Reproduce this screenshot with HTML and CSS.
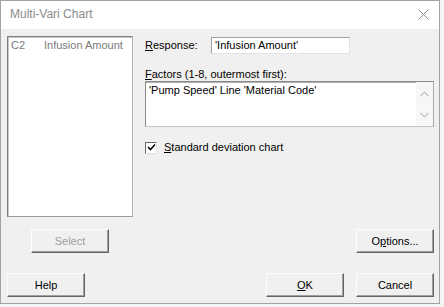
FILE: index.html
```html
<!DOCTYPE html>
<html>
<head>
<meta charset="utf-8">
<link rel="stylesheet" href="styles.css">
</head>
<body>
<div class="window">
  <div class="titlebar">
    <span class="title">Multi-Vari Chart</span>
    <svg class="close" width="11" height="11" viewBox="0 0 11 11"><path d="M0.5 0.5 L10.5 10.5 M10.5 0.5 L0.5 10.5" stroke="#8c8c8c" stroke-width="1" fill="none"/></svg>
  </div>
  <div class="content">
    <div class="top">
      <div class="listbox">
        <div class="item"><span class="col">C2</span><span>Infusion Amount</span></div>
      </div>
      <div class="fields">
        <div class="resp-row">
          <label class="resp-label"><u>R</u>esponse:</label>
          <div class="input">'Infusion Amount'</div>
        </div>
        <div class="factors-label"><u>F</u>actors (1-8, outermost first):</div>
        <div class="textarea">
          <div class="ta-text">'Pump Speed' Line 'Material Code'</div>
          <div class="scrollbar">
            <svg width="9" height="6" viewBox="0 0 9 6"><path d="M0.5 5 L4.5 1 L8.5 5" stroke="#c2c2c2" stroke-width="1.2" fill="none"/></svg>
            <svg width="9" height="6" viewBox="0 0 9 6"><path d="M0.5 1 L4.5 5 L8.5 1" stroke="#c2c2c2" stroke-width="1.2" fill="none"/></svg>
          </div>
        </div>
        <div class="check-row">
          <span class="checkbox"><svg width="9" height="9" viewBox="0 0 9 9"><path d="M1 4 L3.5 6.5 L8 1.5" stroke="#000" stroke-width="1.6" fill="none"/></svg></span>
          <span><u>S</u>tandard deviation chart</span>
        </div>
      </div>
    </div>
    <div class="mid-row">
      <div class="btn select disabled">Select</div>
      <div class="btn">O<u>p</u>tions...</div>
    </div>
    <div class="bottom-row">
      <div class="btn">Help</div>
      <div class="spacer"></div>
      <div class="btn"><u>O</u>K</div>
      <div class="btn">Cancel</div>
    </div>
  </div>
</div>
</body>
</html>
```

FILE: styles.css
```css
html, body {
  margin: 0;
  padding: 0;
  background: #f4f4f4;
  font-family: "Liberation Sans", Arial, sans-serif;
  font-size: 11px;
  color: #000;
}
.window {
  width: 438px;
  height: 302px;
  border: 1px solid #a3a3a3;
  background: #f0f0f0;
  display: flex;
  flex-direction: column;
}
.titlebar {
  height: 28px;
  background: #fff;
  display: flex;
  align-items: center;
  padding-left: 9px;
  padding-right: 10px;
}
.title {
  font-size: 12px;
  color: #8a8a8a;
  flex: 1;
  position: relative;
  top: -1px;
}
.close {
  margin-right: 0;
  position: relative;
  top: -1px;
}
.content {
  padding: 7px 5px 0 6px;
  display: flex;
  flex-direction: column;
}
.top {
  display: flex;
}
.listbox {
  width: 124px;
  height: 179px;
  background: #fff;
  border: 1px solid;
  border-color: #7f7f7f #b4b4b4 #9c9c9c #7f7f7f;
  box-shadow: inset 1px 1px 0 #c8c8c8;
}
.item {
  display: flex;
  line-height: 13px;
  padding: 2px 0 0 3px;
  color: #7a7a7a;
}
.col {
  width: 33px;
}
.fields {
  margin-left: 12px;
  flex: 1;
  display: flex;
  flex-direction: column;
}
.resp-row {
  display: flex;
  align-items: center;
  margin-top: 1px;
}
.resp-label {
  width: 66px;
  line-height: 13px;
}
.input {
  width: 134px;
  height: 15px;
  line-height: 15px;
  padding-left: 3px;
  background: #fff;
  border: 1px solid;
  border-color: #a0a0a0 #e3e3e3 #e3e3e3 #a0a0a0;
}
.factors-label {
  margin-top: 13px;
  line-height: 14px;
}
.textarea {
  margin-top: 0;
  width: 287px;
  height: 44px;
  background: #fff;
  border: 1px solid;
  border-color: #8a8a8a #a8a8a8 #c4c4c4 #8a8a8a;
  box-shadow: inset 0 1px 0 #b0b0b0;
  display: flex;
}
.ta-text {
  flex: 1;
  padding: 2px 0 0 3px;
  line-height: 13px;
}
.scrollbar {
  width: 17px;
  background: #f7f7f7;
  display: flex;
  flex-direction: column;
  align-items: center;
  justify-content: space-between;
  padding: 9px 0 8px;
  box-sizing: border-box;
}
.check-row {
  margin-top: 14px;
  display: flex;
  align-items: center;
  line-height: 13px;
}
.checkbox {
  width: 10px;
  height: 10px;
  border: 1px solid;
  border-color: #6a6a6a #e3e3e3 #e3e3e3 #6a6a6a;
  background: #fff;
  display: flex;
  align-items: center;
  justify-content: center;
  margin-right: 7px;
}
.mid-row {
  display: flex;
  justify-content: space-between;
  margin-top: 12px;
}
.select {
  margin-left: 24px;
}
.bottom-row {
  display: flex;
  margin-top: 20px;
  gap: 12px;
}
.spacer {
  flex: 1;
}
.btn {
  width: 76px;
  height: 22px;
  border: 1px solid;
  border-color: #fcfcfc #646464 #646464 #fcfcfc;
  box-shadow: inset -1px -1px 0 #a0a0a0;
  background: #f0f0f0;
  display: flex;
  align-items: center;
  justify-content: center;
  line-height: 13px;
}
.disabled {
  color: #a0a0a0;
}
```
